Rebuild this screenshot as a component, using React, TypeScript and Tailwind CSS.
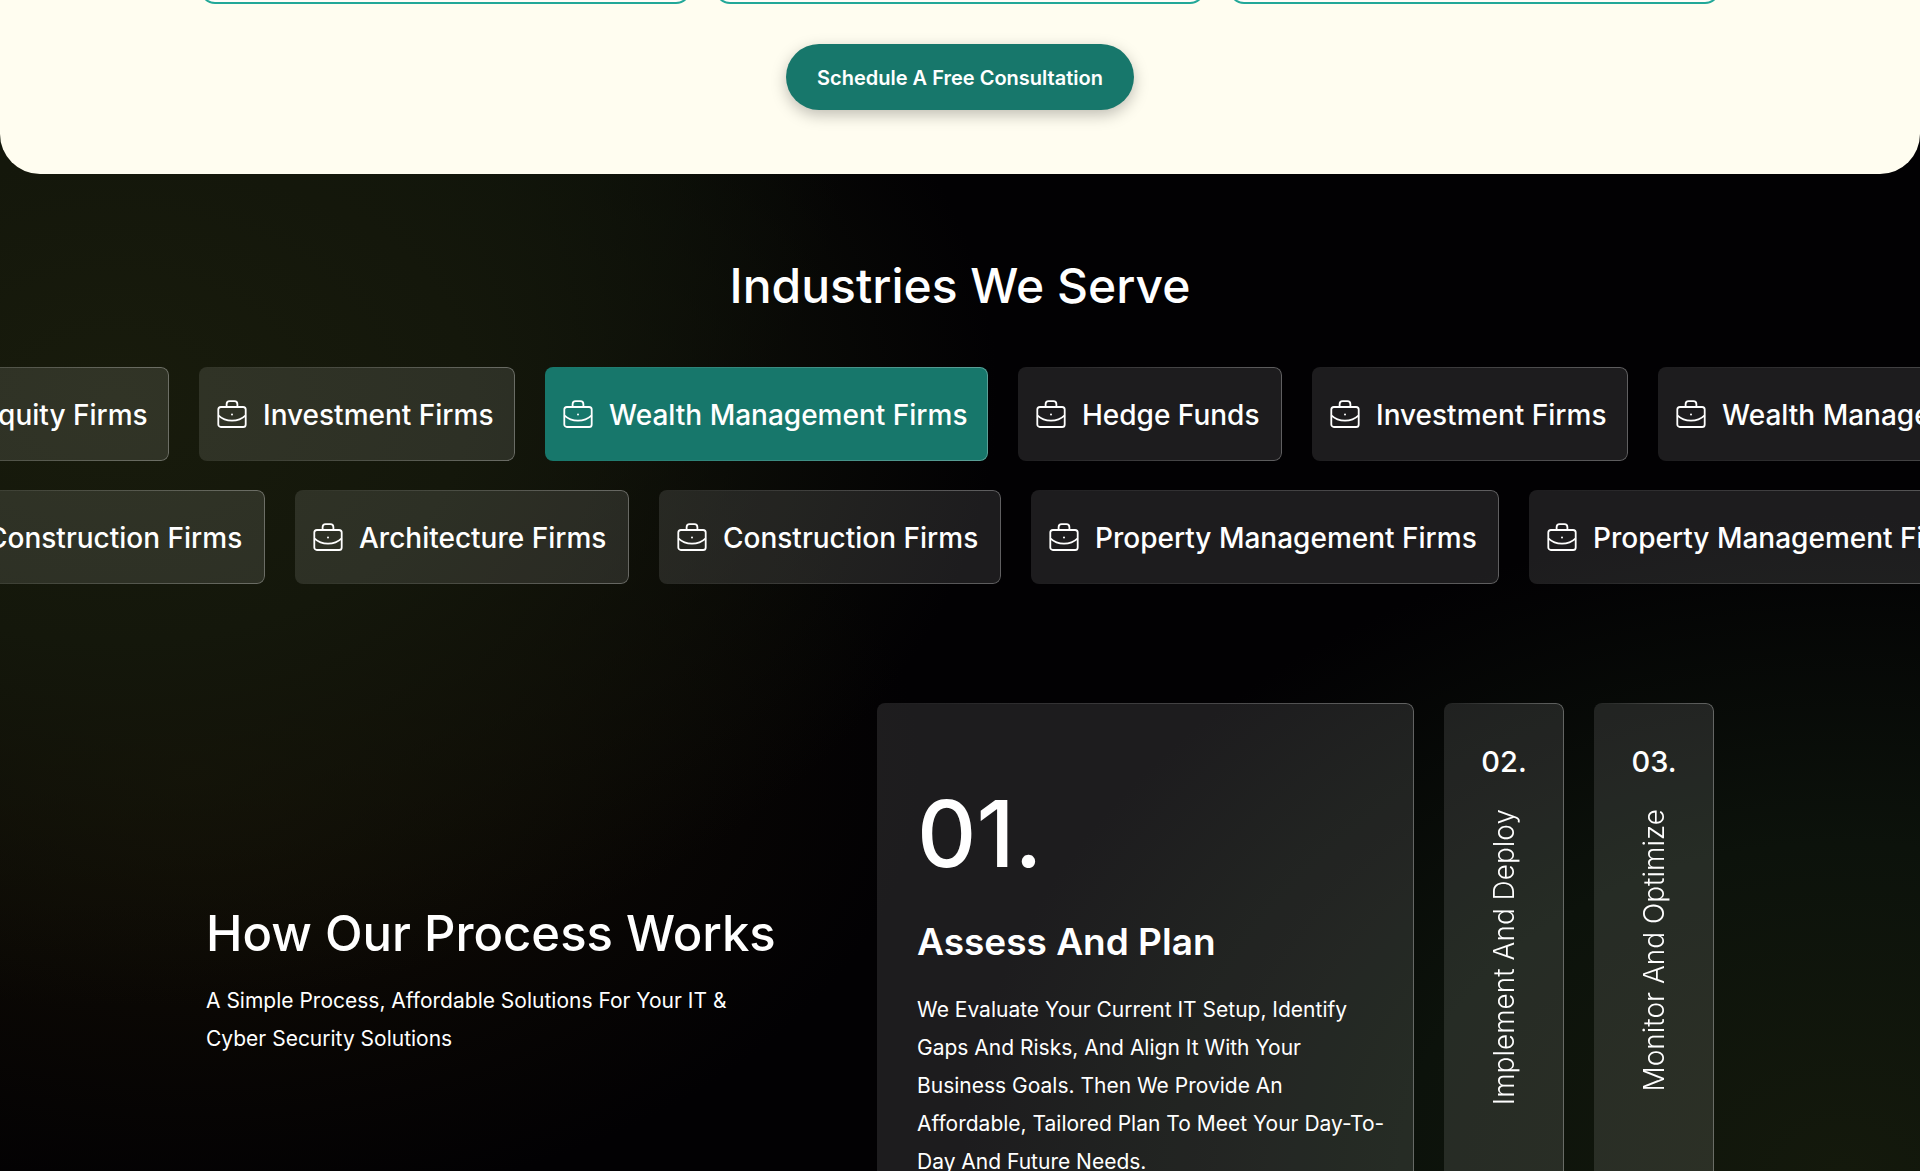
import React from 'react'
import { clsx } from 'clsx'

const topRow = [
  { label: 'Private Equity Firms', width: 'w-[353px]' },
  { label: 'Investment Firms', width: 'w-[316px]' },
  { label: 'Wealth Management Firms', width: 'w-[443px]', active: true },
  { label: 'Hedge Funds', width: 'w-[264px]' },
  { label: 'Investment Firms', width: 'w-[316px]' },
  { label: 'Wealth Management Firms', width: 'w-[443px]' },
]

const bottomRow = [
  { label: 'Construction Firms', width: 'w-[342px]' },
  { label: 'Architecture Firms', width: 'w-[334px]' },
  { label: 'Construction Firms', width: 'w-[342px]' },
  { label: 'Property Management Firms', width: 'w-[468px]' },
  { label: 'Property Management Firms', width: 'w-[468px]' },
]

const nextSteps = [
  { number: '02.', title: 'Implement And Deploy' },
  { number: '03.', title: 'Monitor And Optimize' },
]

// hairline border that fades in from left to right
const fadeBorder =
  'relative before:pointer-events-none before:absolute before:inset-0 before:rounded-[inherit] before:bg-linear-to-r before:from-white/0 before:to-white/30 before:p-px before:content-[""] before:[mask:linear-gradient(#000_0_0)_content-box_exclude,linear-gradient(#000_0_0)]'

const BriefcaseIcon = () => (
  <svg
    viewBox="0 0 30 30"
    className="mb-0.5 size-[30px] flex-none"
    fill="none"
    stroke="currentColor"
    strokeWidth="1.8"
    aria-hidden="true"
  >
    <rect x="1.3" y="8" width="27.4" height="20" rx="2.6" />
    <path d="M9.6 8V5.2a3 3 0 0 1 3-3h4.8a3 3 0 0 1 3 3V8" />
    <path d="M1.3 16.4c3.6 3.4 8.3 5.300 13.700 5.300s10.100-1.900 13.700-5.300" />
    <circle cx="15" cy="15.600" r="1" fill="currentColor" stroke="none" />
  </svg>
)

function IndustryCard({ label, width, active }: { label: string; width: string; active?: boolean }) {
  return (
    <li
      className={clsx(
        'flex h-[94px] flex-none items-center gap-4 rounded-lg pt-0.5 pl-[18px] text-[28px] font-medium whitespace-nowrap',
        fadeBorder,
        width,
        active ? 'bg-[#17776b]' : 'bg-white/11'
      )}
    >
      <BriefcaseIcon />
      {label}
    </li>
  )
}

function Consultation() {
  return (
    <section className="rounded-b-[40px] bg-[#fffdf0] pb-16">
      <div className="mx-auto -mt-7 grid max-w-[1520px] grid-cols-3 gap-6">
        {[1, 2, 3].map((i) => (
          <div key={i} className="h-8 rounded-b-[15px] border-2 border-t-0 border-[#22a898] bg-[#fffef9]" />
        ))}
      </div>
      <div className="mt-10 flex justify-center">
        <button
          type="button"
          className="h-[66px] rounded-full bg-[#17776b] px-[31px] pt-0.5 text-xl font-semibold text-white shadow-[0_5px_15px_rgba(0,0,0,0.25)]"
        >
          Schedule A Free Consultation
        </button>
      </div>
    </section>
  )
}

function Industries() {
  return (
    <section className="pt-20">
      <h2 className="text-center text-5xl leading-[64px] font-medium">Industries We Serve</h2>
      <div className="mt-[49px] flex flex-col gap-[29px] overflow-hidden">
        <ul className="-ml-[184px] flex gap-[30px]">
          {topRow.map((item, index) => (
            <IndustryCard key={index} {...item} />
          ))}
        </ul>
        <ul className="-ml-[77px] flex gap-[30px]">
          {bottomRow.map((item, index) => (
            <IndustryCard key={index} {...item} />
          ))}
        </ul>
      </div>
    </section>
  )
}

function Process() {
  return (
    <section className="mx-auto mt-[119px] flex max-w-[1508px] items-stretch gap-[30px]">
      <div className="flex flex-1 flex-col justify-center">
        <h2 className="text-[49px] leading-[64px] font-medium">How Our Process Works</h2>
        <p className="mt-4 max-w-[560px] text-[21px] leading-[38px]">
          A Simple Process, Affordable Solutions For Your IT &amp; Cyber Security Solutions
        </p>
      </div>
      <article
        className={clsx('flex h-[554px] w-[537px] flex-col justify-center rounded-lg bg-white/11 pr-5 pl-10', fadeBorder)}
      >
        <p className="text-[92px] leading-[110px] font-medium">01.</p>
        <h3 className="mt-7 text-[37px] leading-[50px] font-semibold">Assess And Plan</h3>
        <p className="mt-6 text-[21px] leading-[38px]">
          We Evaluate Your Current IT Setup, Identify Gaps And Risks, And Align It With Your Business Goals. Then We
          Provide An Affordable, Tailored Plan To Meet Your Day-To-Day And Future Needs.
        </p>
      </article>
      {nextSteps.map((step) => (
        <article
          key={step.number}
          className={clsx('flex w-[120px] flex-col items-center rounded-lg bg-white/11 pt-10', fadeBorder)}
        >
          <p className="text-[29px] leading-[38px] font-medium">{step.number}</p>
          <h3 className="mt-7 rotate-180 text-[28px] leading-[38px] font-light whitespace-nowrap [writing-mode:vertical-rl]">
            {step.title}
          </h3>
        </article>
      ))}
    </section>
  )
}

export default function App() {
  return (
    <main className="h-screen overflow-hidden bg-[#020103] bg-[radial-gradient(ellipse_46%_52%_at_6%_34%,#181b0c_0%,#14170b_40%,transparent_100%),radial-gradient(ellipse_38%_44%_at_6%_12%,#13200f_0%,transparent_100%),radial-gradient(ellipse_38%_38%_at_10%_66%,#130e05_0%,transparent_100%),radial-gradient(ellipse_46%_56%_at_96%_100%,#14190c_0%,#0c120b_50%,transparent_100%)] font-['Inter',sans-serif] text-white">
      <Consultation />
      <Industries />
      <Process />
    </main>
  )
}
